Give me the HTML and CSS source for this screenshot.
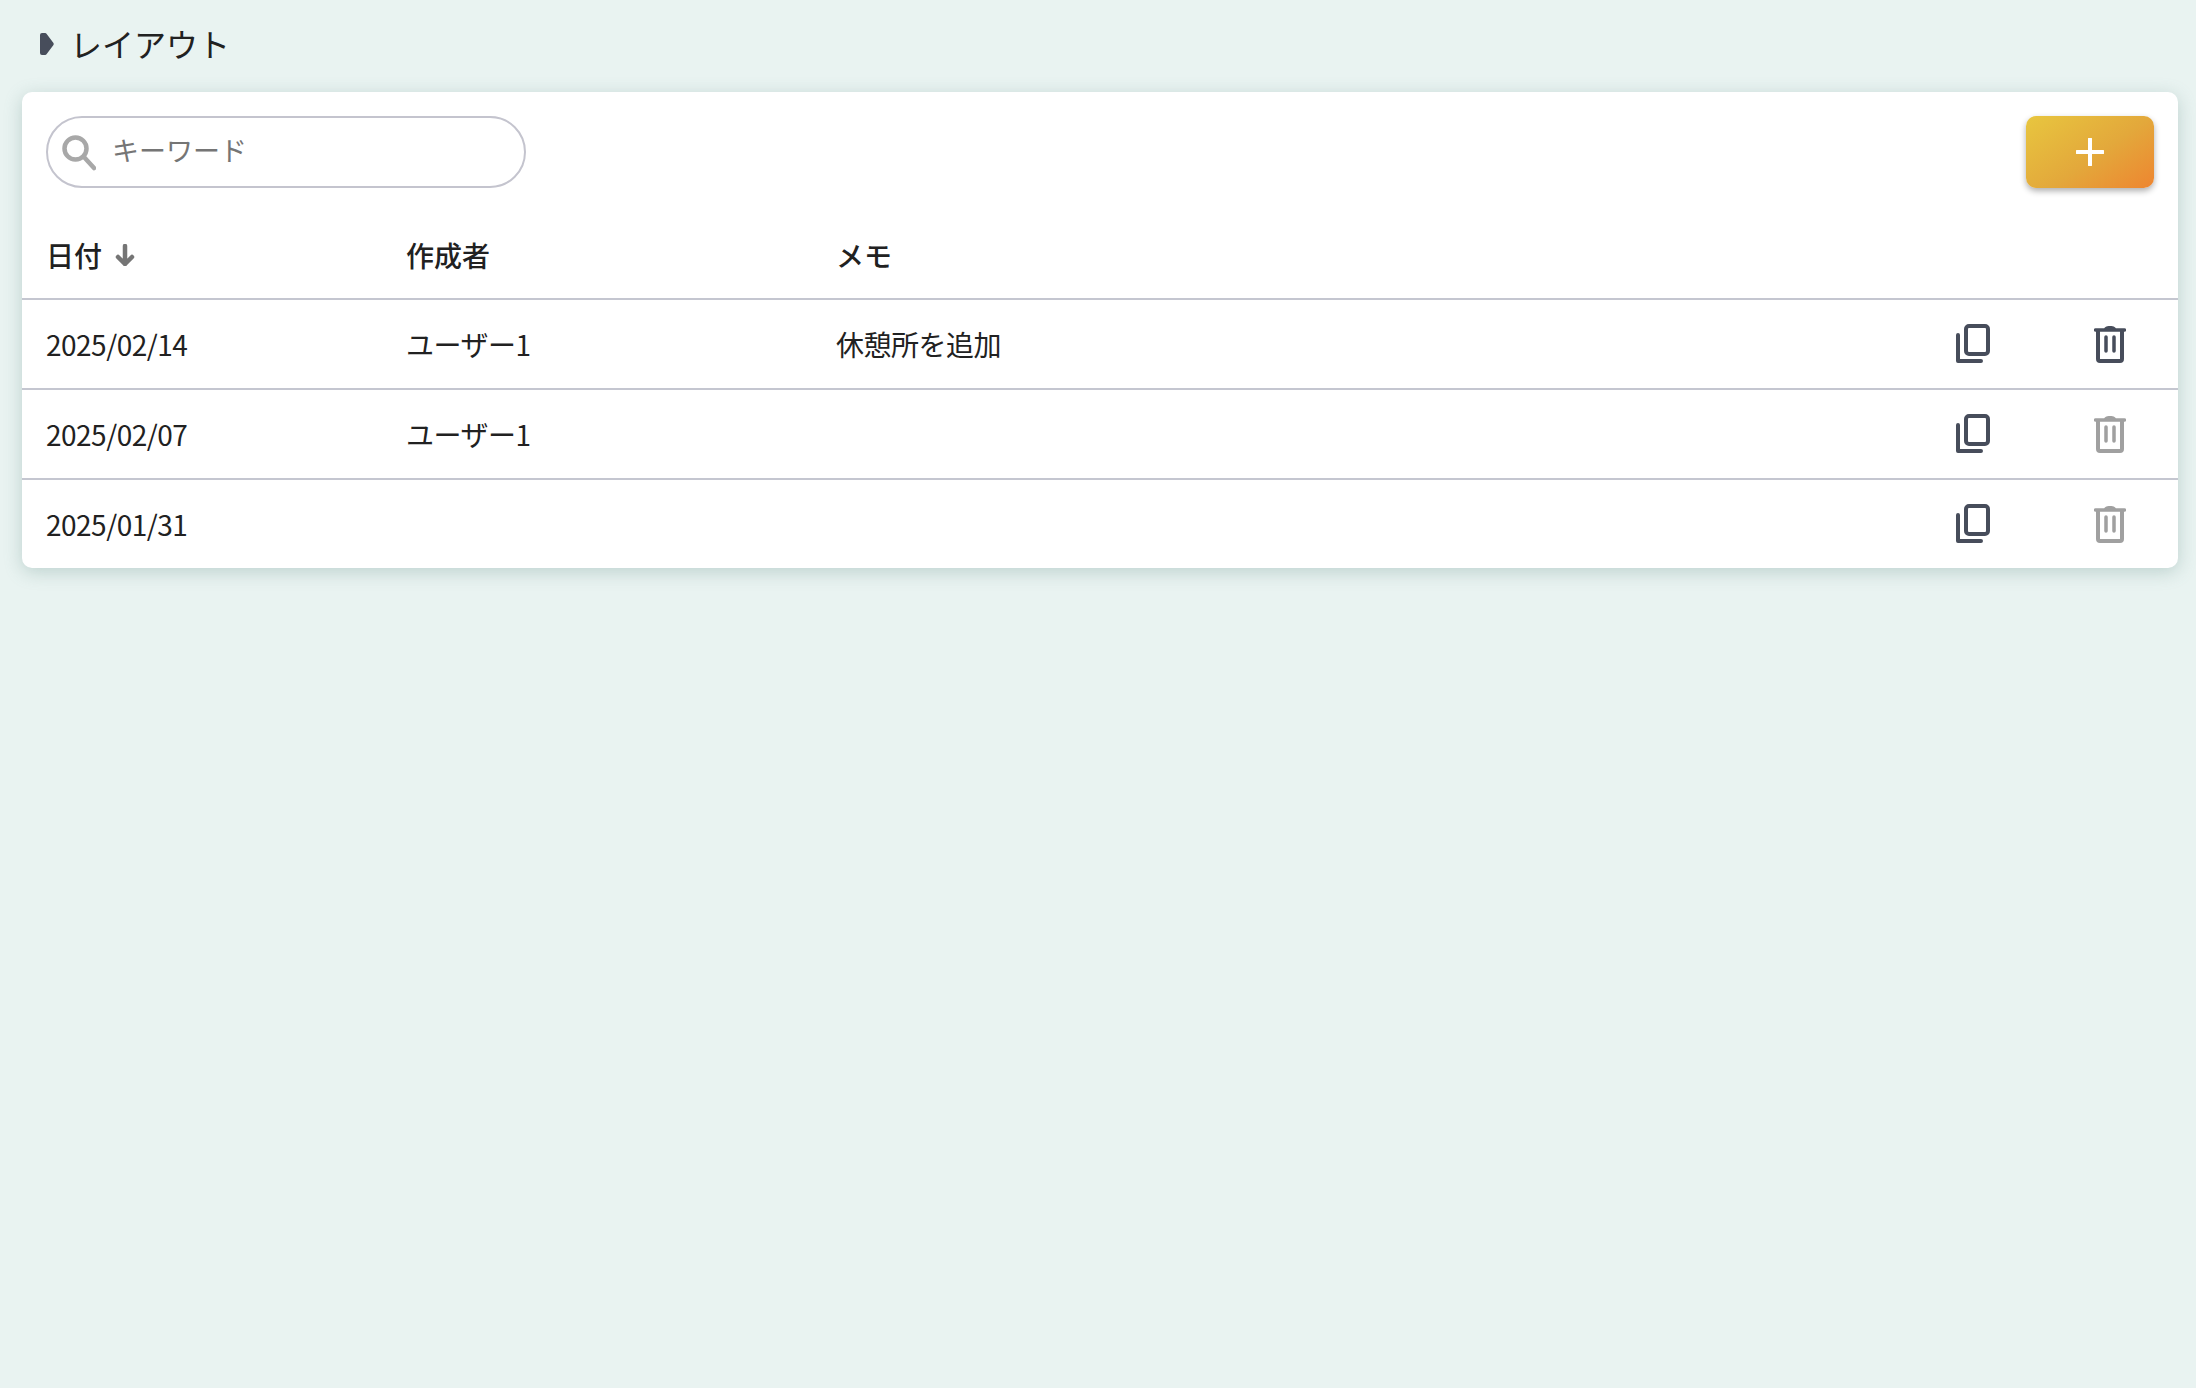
FILE: index.html
```html
<!DOCTYPE html>
<html lang="ja">
<head>
<meta charset="utf-8">
<title>レイアウト</title>
<link rel="stylesheet" href="styles.css">
</head>
<body>
<header class="page-title">
  <svg class="title-mark" viewBox="0 0 14 22" width="14" height="22"><path d="M2 0h3a2 2 0 0 1 1.700.9l6.400 8.500a2.600 2.600 0 0 1 0 3.200l-6.400 8.500a2 2 0 0 1-1.700.9H2a2 2 0 0 1-2-2V2a2 2 0 0 1 2-2z" fill="#474d5b"/></svg>
  <h1>レイアウト</h1>
</header>
<main class="card">
  <div class="toolbar">
    <label class="search">
      <svg class="search-icon" viewBox="0 0 34 36" width="34" height="36"><circle cx="13.5" cy="13.5" r="11" fill="none" stroke="#a8a8a8" stroke-width="4.500"/><path d="M21.5 21.5 32 33" fill="none" stroke="#a8a8a8" stroke-width="4.500" stroke-linecap="round"/></svg>
      <input type="text" placeholder="キーワード">
    </label>
    <button class="add" type="button" aria-label="追加">
      <svg viewBox="0 0 28 28" width="28" height="28"><path d="M14 1v26M1 14h26" fill="none" stroke="#fff" stroke-width="4" stroke-linecap="round"/></svg>
    </button>
  </div>
  <table class="list">
    <colgroup><col class="c-date"><col class="c-user"><col class="c-memo"><col class="c-copy"><col class="c-del"></colgroup>
    <thead>
      <tr>
        <th><span class="sort">日付<svg viewBox="0 0 20 22" width="20" height="22"><path d="M10 2v18M3 13l7 7 7-7" fill="none" stroke="#757575" stroke-width="4.500" stroke-linecap="round" stroke-linejoin="round"/></svg></span></th>
        <th>作成者</th>
        <th>メモ</th>
        <th></th>
        <th></th>
      </tr>
    </thead>
    <tbody>
      <tr>
        <td>2025/02/14</td><td>ユーザー1</td><td>休憩所を追加</td>
        <td class="act"><svg class="ico" viewBox="0 0 34 40" width="34" height="40"><path d="M2 11v26h23" fill="none" stroke="#474d5b" stroke-width="4" stroke-linecap="round" stroke-linejoin="round"/><rect x="10" y="2" width="22" height="28" rx="3" fill="none" stroke="#474d5b" stroke-width="4"/></svg></td>
        <td class="act"><svg class="ico" viewBox="0 0 32 38" width="32" height="38"><path d="M1.500 5h29" fill="none" stroke="#474d5b" stroke-width="3.500" stroke-linecap="round"/><path d="M10 5c0-3 2-4 6-4s6 1 6 4z" fill="#474d5b"/><path d="M4 5v29a2 2 0 0 0 2 2h20a2 2 0 0 0 2-2V5" fill="none" stroke="#474d5b" stroke-width="4"/><path d="M12 12v14M20 12v14" fill="none" stroke="#474d5b" stroke-width="3.500" stroke-linecap="round"/></svg></td>
      </tr>
      <tr>
        <td>2025/02/07</td><td>ユーザー1</td><td></td>
        <td class="act"><svg class="ico" viewBox="0 0 34 40" width="34" height="40"><path d="M2 11v26h23" fill="none" stroke="#474d5b" stroke-width="4" stroke-linecap="round" stroke-linejoin="round"/><rect x="10" y="2" width="22" height="28" rx="3" fill="none" stroke="#474d5b" stroke-width="4"/></svg></td>
        <td class="act"><svg class="ico" viewBox="0 0 32 38" width="32" height="38"><path d="M1.500 5h29" fill="none" stroke="#a0a0a0" stroke-width="3.500" stroke-linecap="round"/><path d="M10 5c0-3 2-4 6-4s6 1 6 4z" fill="#a0a0a0"/><path d="M4 5v29a2 2 0 0 0 2 2h20a2 2 0 0 0 2-2V5" fill="none" stroke="#a0a0a0" stroke-width="4"/><path d="M12 12v14M20 12v14" fill="none" stroke="#a0a0a0" stroke-width="3.500" stroke-linecap="round"/></svg></td>
      </tr>
      <tr>
        <td>2025/01/31</td><td></td><td></td>
        <td class="act"><svg class="ico" viewBox="0 0 34 40" width="34" height="40"><path d="M2 11v26h23" fill="none" stroke="#474d5b" stroke-width="4" stroke-linecap="round" stroke-linejoin="round"/><rect x="10" y="2" width="22" height="28" rx="3" fill="none" stroke="#474d5b" stroke-width="4"/></svg></td>
        <td class="act"><svg class="ico" viewBox="0 0 32 38" width="32" height="38"><path d="M1.500 5h29" fill="none" stroke="#a0a0a0" stroke-width="3.500" stroke-linecap="round"/><path d="M10 5c0-3 2-4 6-4s6 1 6 4z" fill="#a0a0a0"/><path d="M4 5v29a2 2 0 0 0 2 2h20a2 2 0 0 0 2-2V5" fill="none" stroke="#a0a0a0" stroke-width="4"/><path d="M12 12v14M20 12v14" fill="none" stroke="#a0a0a0" stroke-width="3.500" stroke-linecap="round"/></svg></td>
      </tr>
    </tbody>
  </table>
</main>
</body>
</html>
```
FILE: styles.css
```css
* { box-sizing: border-box; }
html, body { height: 100%; }
body {
  margin: 0;
  padding: 0 18px 0 22px;
  background: #e9f3f1;
  color: #212121;
  font-family: "Noto Sans CJK JP", "Noto Sans", sans-serif;
  font-size: 28px;
}
.page-title {
  display: flex;
  align-items: center;
  height: 92px;
  padding: 0 0 6px 18px;
  gap: 16px;
}
.title-mark { flex: none; margin-top: 2px; }
.page-title h1 { margin: 0; font-size: 32px; font-weight: 400; line-height: 1; }
.card {
  background: #fff;
  border-radius: 10px;
  box-shadow: 0 4px 18px rgba(95, 140, 133, 0.32);
}
.toolbar {
  display: flex;
  justify-content: space-between;
  align-items: flex-start;
  padding: 24px 24px 0;
}
.search {
  display: flex;
  align-items: center;
  width: 480px;
  height: 72px;
  padding-left: 14px;
  border: 2px solid #c4c4ce;
  border-radius: 36px;
}
.search-icon { flex: none; margin-top: 2px; }
.search input {
  flex: 1;
  min-width: 0;
  margin-left: 16px;
  margin-top: -6px;
  padding: 0;
  border: 0;
  outline: 0;
  background: transparent;
  font: inherit;
  font-size: 27px;
  color: #212121;
}
.search input::placeholder { color: #757575; opacity: 1; }
.add {
  display: flex;
  align-items: center;
  justify-content: center;
  width: 128px;
  height: 72px;
  padding: 0;
  border: 0;
  border-radius: 10px;
  background: linear-gradient(145deg, #e8c63f 0%, #e3a83b 55%, #ee8530 100%);
  box-shadow: 0 3px 6px rgba(0, 0, 0, 0.32);
}
.list {
  width: 100%;
  border-collapse: collapse;
  table-layout: fixed;
}
.c-date { width: 360px; }
.c-user { width: 430px; }
.c-copy { width: 137px; }
.c-del { width: 137px; }
.list th, .list td {
  padding: 0 0 0 24px;
  text-align: left;
}
.list th {
  height: 111px;
  padding-top: 23px;
  font-weight: 500;
  border-bottom: 2px solid #c4c6d0;
}
.list td {
  height: 90px;
  border-bottom: 2px solid #c4c6d0;
  letter-spacing: -0.5px;
}
.list tbody tr:last-child td { border-bottom: 0; height: 89px; }
.sort { display: inline-flex; align-items: center; gap: 13px; }
.list td.act { padding: 0; text-align: center; }
.ico { display: block; margin: 0 auto; }
```
